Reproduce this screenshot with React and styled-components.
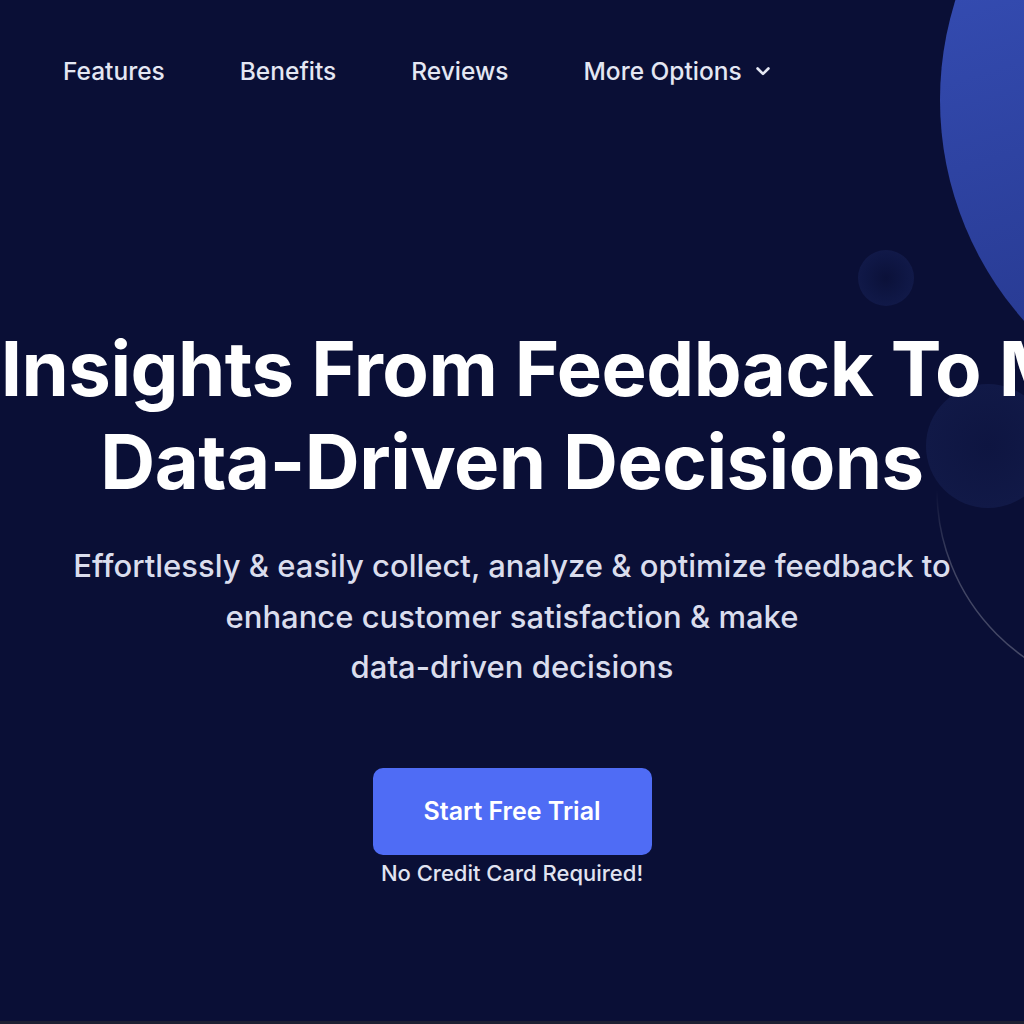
import React from 'react';
import styled, { createGlobalStyle } from 'styled-components';

const GlobalStyle = createGlobalStyle`
  html, body {
    margin: 0;
    padding: 0;
    background: #0a0f36;
    overflow: hidden;
  }
  * { box-sizing: border-box; }
`;

const Page = styled.div`
  position: relative;
  width: 1024px;
  height: 1024px;
  overflow: hidden;
  background: #0a0f36;
  font-family: Inter, "Noto Sans", sans-serif;
  border-bottom: 3px solid #1c2033;
`;

const Decor = styled.svg`
  position: absolute;
  inset: 0;
  pointer-events: none;
`;

const Nav = styled.nav`
  position: relative;
  display: flex;
  align-items: center;
  gap: 75px;
  padding: 54px 0 0 63px;
`;

const NavLink = styled.a`
  display: flex;
  align-items: center;
  gap: 11px;
  color: #e4e7f3;
  font-size: 24.5px;
  font-weight: 500;
  text-decoration: none;
  line-height: 34px;
`;

const Hero = styled.section`
  position: relative;
  display: flex;
  flex-direction: column;
  align-items: center;
  padding-top: 234px;
`;

const Title = styled.h1`
  margin: 0;
  display: flex;
  flex-direction: column;
  align-items: center;
  color: #ffffff;
  font-size: 76px;
  font-weight: 700;
  line-height: 93px;
  letter-spacing: -0.5px;
`;

const TitleLine = styled.span`
  white-space: nowrap;
`;

const Sub = styled.p`
  margin: 33px 0 0;
  width: 960px;
  text-align: center;
  color: #dadded;
  font-size: 31px;
  font-weight: 500;
  line-height: 50.5px;
`;

const Cta = styled.button`
  margin-top: 75px;
  width: 279px;
  height: 87px;
  border: 0;
  border-radius: 10px;
  background: #4f6cf5;
  color: #ffffff;
  font-family: inherit;
  font-size: 25px;
  font-weight: 600;
  cursor: pointer;
`;

const Note = styled.div`
  margin-top: 4px;
  color: #e1e4f1;
  font-size: 22px;
  font-weight: 500;
  line-height: 28px;
`;

function Chevron() {
  return (
    <svg width="20" height="20" viewBox="0 0 24 24" fill="none" stroke="#e4e7f3" strokeWidth="3.2" strokeLinecap="round" strokeLinejoin="round">
      <path d="M5.5 9l6.5 6.5 6.5-6.5" />
    </svg>
  );
}

export default function App() {
  return (
    <>
      <GlobalStyle />
      <Page>
        <Decor width="1024" height="1024" viewBox="0 0 1024 1024">
          <defs>
            <linearGradient id="orb" x1="0" y1="0" x2="0.3" y2="1">
              <stop offset="0" stopColor="#3b55c2" />
              <stop offset="1" stopColor="#243589" />
            </linearGradient>
            <radialGradient id="bubble" cx="0.5" cy="0.5" r="0.5">
              <stop offset="0" stopColor="#0b1139" />
              <stop offset="0.75" stopColor="#0f1745" />
              <stop offset="1" stopColor="#111948" />
            </radialGradient>
            <radialGradient id="bubbleBig" cx="0.5" cy="0.5" r="0.5">
              <stop offset="0" stopColor="#0e1541" />
              <stop offset="1" stopColor="#111947" />
            </radialGradient>
            <linearGradient id="arcFade" x1="0" y1="0" x2="0" y2="1">
              <stop offset="0" stopColor="#ffffff" stopOpacity="0" />
              <stop offset="0.5" stopColor="#ffffff" stopOpacity="0" />
              <stop offset="0.68" stopColor="#ffffff" stopOpacity="0.22" />
              <stop offset="1" stopColor="#ffffff" stopOpacity="0.25" />
            </linearGradient>
          </defs>
          <circle cx="1272" cy="100" r="332" fill="url(#orb)" />
          <circle cx="886" cy="278" r="28" fill="url(#bubble)" />
          <circle cx="988" cy="446" r="62" fill="url(#bubbleBig)" />
          <circle cx="1141" cy="490" r="204" fill="none" stroke="url(#arcFade)" strokeWidth="1.5" />
        </Decor>
        <Nav>
          <NavLink href="#features">Features</NavLink>
          <NavLink href="#benefits">Benefits</NavLink>
          <NavLink href="#reviews">Reviews</NavLink>
          <NavLink href="#more">More Options <Chevron /></NavLink>
        </Nav>
        <Hero>
          <Title>
            <TitleLine>Find Insights From Feedback To Make</TitleLine>
            <TitleLine>Data-Driven Decisions</TitleLine>
          </Title>
          <Sub>
            Effortlessly &amp; easily collect, analyze &amp; optimize feedback to
            <br />enhance customer satisfaction &amp; make
            <br />data-driven decisions
          </Sub>
          <Cta>Start Free Trial</Cta>
          <Note>No Credit Card Required!</Note>
        </Hero>
      </Page>
    </>
  );
}
